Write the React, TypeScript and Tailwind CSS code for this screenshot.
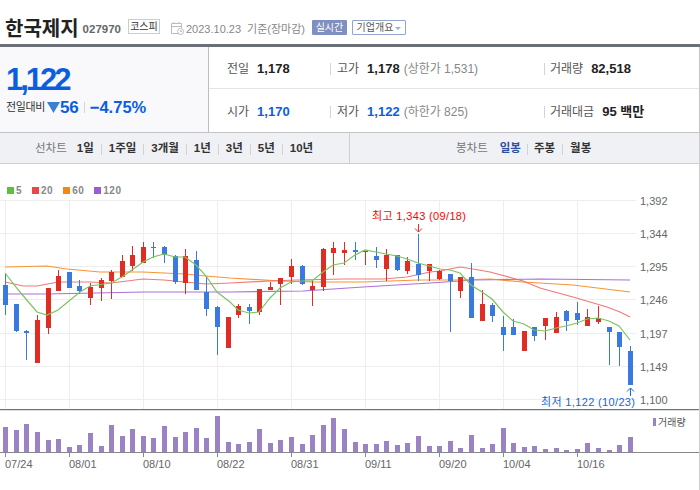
const KR = "font-['Liberation_Sans','Noto_Sans_CJK_KR',sans-serif]";

// [x, bodyTop, bodyBottom, wickTop, wickBottom, up?]
const candles: [number, number, number, number, number, number][] = [
  [5.5, 285, 305, 274, 315, 0], [16.5, 304, 331, 304, 332, 0], [26.5, 331, 333, 330, 360, 0],
  [37.5, 320, 363, 315, 363, 1], [48.5, 288, 328, 288, 334, 1], [58.5, 276, 291, 270, 291, 1],
  [69.5, 272, 288, 272, 288, 0], [79.5, 286, 291, 280, 294, 0], [90.5, 287, 298, 283, 305, 1],
  [101.5, 280, 288, 278, 301, 1], [111.5, 272, 281, 270, 299, 1], [122.5, 261, 277, 255, 277, 1],
  [132.5, 255, 266, 246, 271, 1], [143.5, 247, 263, 242, 263, 1], [153.5, 247, 248, 242, 258, 0],
  [164.5, 247, 255, 246, 263, 0], [175.5, 256, 282, 255, 284, 0], [185.5, 256, 283, 249, 294, 1],
  [196.5, 260, 290, 251, 290, 0], [206.5, 292, 309, 276, 316, 0], [217.5, 307, 327, 306, 355, 0],
  [228.5, 317, 348, 317, 345, 1], [238.5, 306, 315, 304, 318, 1], [249.5, 307, 311, 304, 324, 0],
  [259.5, 289, 312, 289, 315, 1], [270.5, 287, 290, 282, 290, 1], [280.5, 278, 284, 278, 305, 1],
  [291.5, 266, 277, 259, 284, 1], [302.5, 266, 284, 265, 285, 0], [312.5, 286, 290, 280, 306, 1],
  [323.5, 249, 287, 248, 291, 1], [333.5, 248, 253, 242, 275, 1], [344.5, 250, 253, 242, 265, 1],
  [355.5, 250, 252, 242, 260, 0], [365.5, 251, 252, 251, 265, 1], [376.5, 256, 260, 247, 268, 0],
  [386.5, 255, 269, 249, 281, 1], [397.5, 255, 270, 255, 271, 0], [407.5, 261, 271, 257, 274, 1],
  [418.5, 264, 275, 234, 281, 0], [429.5, 264, 271, 264, 281, 1], [439.5, 271, 279, 270, 280, 1],
  [450.5, 274, 281, 274, 332, 0], [460.5, 277, 291, 277, 298, 1], [471.5, 277, 318, 263, 318, 0],
  [482.5, 304, 321, 290, 321, 1], [492.5, 305, 316, 303, 322, 0], [503.5, 327, 335, 316, 351, 0],
  [513.5, 327, 335, 319, 335, 0], [524.5, 331, 351, 331, 351, 1], [534.5, 327, 336, 327, 341, 0],
  [545.5, 318, 326, 318, 340, 1], [556.5, 317, 333, 312, 333, 1], [566.5, 311, 321, 310, 331, 0],
  [577.5, 313, 320, 302, 325, 0], [587.5, 317, 326, 309, 326, 1], [598.5, 318, 322, 306, 324, 1],
  [609.5, 327, 332, 327, 365, 0], [619.5, 332, 347, 332, 366, 0], [630.5, 351, 385, 346, 385, 0],
];

const volumes = [
  25, 22, 28, 20, 12, 13, 5, 7, 19, 6, 27, 16, 23, 16, 14, 26, 15, 20, 24, 14,
  36, 10, 8, 10, 23, 9, 12, 15, 8, 17, 27, 34, 23, 10, 8, 8, 11, 7, 9, 16,
  6, 6, 11, 4, 17, 4, 8, 24, 9, 5, 6, 3, 4, 2, 3, 9, 4, 2, 7, 15,
];

const ma5 = "5,273 20,292 37,312 47,315 58,310 80,292 90,286 111,283 122,277 132,270 143,262 153,257 164,254 175,257 185,257 196,265 206,276 217,292 230,302 238,310 249,313 259,312 270,298 280,288 291,282 302,281 312,281 323,272 333,265 344,263 355,255 365,250 376,252 386,254 397,256 407,259 418,263 429,266 440,269 450,270 460,273 471,285 482,292 492,299 503,312 513,321 524,324 534,330 545,331 556,328 566,326 577,323 587,319 598,318 609,321 619,326 630,340";
const ma20 = "5,282 23,286 37,286 58,282 90,282 111,283 143,279 164,280 185,282 206,284 230,283 270,281 297,280 343,279 383,279 407,277 430,272 440,271 460,267 473,269 490,272 523,281 540,288 573,297 607,307 620,312 630,317";
const ma60 = "5,267 47,266 67,269 100,272 143,272 185,274 206,276 230,278 280,281 313,282 363,282 418,280 460,280 490,279 523,282 573,285 630,292";
const ma120 = "5,294 47,294 143,292 230,292 303,291 363,287 430,283 460,281 473,280 540,279 630,280";

const gridY = [200.5, 233.5, 266.5, 299.5, 333.5, 366.5, 399.5];
const gridX = [5.5, 69.5, 143.5, 217.5, 291.5, 365.5, 439.5, 503.5, 577.5];
const priceLabels = ["1,392", "1,344", "1,295", "1,246", "1,197", "1,149", "1,100"];
const dates = [
  ["07/24", 5.5], ["08/01", 69.5], ["08/10", 143.5], ["08/22", 217.5], ["08/31", 291.5],
  ["09/11", 365.5], ["09/20", 439.5], ["10/04", 503.5], ["10/16", 577.5],
] as [string, number][];

const legend = [
  ["5", "bg-[#5dbf3e]"], ["20", "bg-[#ef4444]"], ["60", "bg-[#f58717]"], ["120", "bg-[#a05bd0]"],
];

function Sep() {
  return <span className="h-[12px] w-px bg-[#d5d5d5]" />;
}

function Cell({ label, value, tone, gap, extra }: { label: string; value: string; tone: string; gap: string; extra?: string }) {
  return (
    <div className="flex items-center">
      <span className={`text-[12px] text-[#555] ${gap}`}>{label}</span>
      <span className={`text-[13px] font-bold ${tone}`}>{value}</span>
      {extra && <span className="ml-[4px] text-[12px] text-[#888]">{extra}</span>}
    </div>
  );
}

function InfoRow({ a, b, c, className }: { a: React.ReactNode; b: React.ReactNode; c: React.ReactNode; className: string }) {
  return (
    <div className={`flex items-center ${className}`}>
      <div className="w-[121px] pl-[18px]">{a}</div>
      <Sep />
      <div className="w-[213px] pl-[6px]">{b}</div>
      <Sep />
      <div className="pl-[5px]">{c}</div>
    </div>
  );
}

function Periods() {
  const items = ["1일", "1주일", "3개월", "1년", "3년", "5년", "10년"];
  return (
    <div className="flex w-[350px] items-center border-r border-[#cfcfcf] pt-[2px] pl-[35px]">
      <span className="mr-[10px] text-[#777]">선차트</span>
      {items.map((t, i) => (
        <div key={t} className="flex items-center">
          {i > 0 && <span className="mx-[7px] h-[11px] w-px bg-[#d2d2d6]" />}
          <span className="font-bold text-[#333]">{t}</span>
        </div>
      ))}
    </div>
  );
}

function Chart() {
  return (
    <svg width="699" height="296" viewBox="0 194 699 296" className="block">
      {gridY.map((y) => <line key={y} x1="0" x2="636" y1={y} y2={y} stroke="#eeeeee" />)}
      {gridX.map((x) => <line key={x} x1={x} x2={x} y1="200" y2="409" stroke="#eeeeee" />)}

      <polyline points={ma120} fill="none" stroke="#a868d4" strokeWidth="1.2" opacity="0.95" />
      <polyline points={ma60} fill="none" stroke="#f58f2a" strokeWidth="1.2" opacity="0.95" />
      <polyline points={ma20} fill="none" stroke="#ee6a6a" strokeWidth="1.2" opacity="0.9" />

      {candles.map(([x, t, b, wt, wb, up]) => (
        <g key={x} fill={up ? "#e12c24" : "#3a7ae0"}>
          <rect x={x - 0.5} y={wt} width="1" height={wb - wt} />
          <rect x={x - 2.5} y={t} width="5" height={Math.max(b - t, 1)} />
        </g>
      ))}
      <polyline points={ma5} fill="none" stroke="#7cc35f" strokeWidth="1.2" />

      {priceLabels.map((p, i) => (
        <text key={p} x="640" y={gridY[i] + 4} fontSize="11" fill="#666" fontFamily="'Liberation Sans', sans-serif">{p}</text>
      ))}

      <text x="372" y="220" fontSize="11" fill="#ff0000" letterSpacing="0.35" fontFamily="'Liberation Sans', 'Noto Sans CJK KR', sans-serif">최고 1,343 (09/18)</text>
      <path d="M418.5 224v8M415 228.5l3.5 3.5 3.5-3.5" fill="none" stroke="#e12c24" />
      <text x="541" y="406" fontSize="11" fill="#1a66d0" letterSpacing="0.35" fontFamily="'Liberation Sans', 'Noto Sans CJK KR', sans-serif">최저 1,122 (10/23)</text>
      <path d="M630.5 388v8M627 391.5l3.5-3.5 3.5 3.5" fill="none" stroke="#1a66d0" />

      <rect x="0" y="409" width="700" height="1" fill="#6d7278" />
      <rect x="0" y="410" width="700" height="1" fill="#dde0e4" />

      {candles.map(([x], i) => (
        <rect key={x} x={x - 2.5} y={452 - volumes[i]} width="5" height={volumes[i]} fill="#9b82c4" />
      ))}
      <rect x="0" y="452" width="700" height="1" fill="#85888c" />
      {dates.map(([d, x]) => (
        <g key={d}>
          <line x1={x} x2={x} y1="453" y2="457" stroke="#85888c" />
          <text x={x - 0.5} y="468" fontSize="11" fill="#666" fontFamily="'Liberation Sans', sans-serif">{d}</text>
        </g>
      ))}

      <rect x="653" y="418" width="3" height="8" fill="#9b82c4" />
      <text x="658" y="426" fontSize="10" fill="#555" fontFamily="'Liberation Sans', 'Noto Sans CJK KR', sans-serif">거래량</text>
    </svg>
  );
}

export default function App() {
  return (
    <div className={`h-[490px] w-[700px] overflow-hidden bg-white ${KR}`}>
      <header className="flex h-[44px] items-end pl-[5px]">
        <h1 className="text-[20px] leading-[30px] font-bold text-[#222]">한국제지</h1>
        <span className="mb-[6px] ml-[4px] text-[11.5px] font-bold text-[#666]">027970</span>
        <span className="mb-[10px] ml-[7px] flex h-[15px] w-[32px] items-center justify-center border border-[#ccc] text-[10px] text-[#333]">코스피</span>
        <svg width="13" height="13" viewBox="0 0 13 13" className="mb-[9px] ml-[11px]" fill="none" stroke="#bbb">
          <path d="M8 11.5H.5v-10h10V6M.5 4.5h10M3 0v2M8 0v2" />
          <circle cx="9.5" cy="9.5" r="3" />
          <path d="M9.5 8v1.5H11" />
        </svg>
        <span className="mb-[7px] ml-[2px] text-[11px] text-[#888]">2023.10.23</span>
        <span className="mb-[7px] ml-[6px] text-[11px] text-[#888]">기준(장마감)</span>
        <span className="mb-[9px] ml-[7px] flex h-[15px] w-[35px] items-center justify-center rounded-[1px] bg-[#7f8fbf] text-[10px] text-white">실시간</span>
        <span className="mb-[9px] ml-[5px] flex h-[15px] w-[54px] items-center justify-center gap-[2px] rounded-[1px] border border-[#93a3cc] text-[10px] text-[#555]">
          기업개요
          <span className="mt-[1px] h-0 w-0 border-x-[3px] border-t-[3px] border-x-transparent border-t-[#a3aec9]" />
        </span>
      </header>

      <div className="h-[3px] bg-[#6b6f76]" />

      <section className="flex h-[86px] border-r border-b border-[#c4c4c8]">
        <div className="flex w-[209px] flex-col border-r border-[#bdbdc2] bg-[#f9f9fb] pt-[15px] pl-[6px]">
          <div className="text-[31px] leading-[36px] font-bold tracking-[-3px] text-[#0a5fe0]">1,122</div>
          <div className="mt-[1px] flex items-center">
            <span className="text-[11px] tracking-[-0.4px] text-[#333]">전일대비</span>
            <svg width="13" height="11" viewBox="0 0 13 11" className="ml-[2px]">
              <path d="M0 0h13L6.5 11z" fill="#3c7fd0" />
            </svg>
            <span className="text-[17px] leading-none font-bold text-[#0a5fe0]">56</span>
            <span className="mx-[5px] h-[11px] w-px bg-[#d5d5d5]" />
            <span className="text-[16.5px] leading-none font-bold text-[#0a5fe0]">−4.75%</span>
          </div>
        </div>
        <div className="flex flex-1 flex-col">
          <InfoRow
            className="h-[42px] border-b border-[#e5e5e8] pt-[2px]"
            a={<Cell label="전일" value="1,178" tone="text-[#222]" gap="mr-[8px]" />}
            b={<Cell label="고가" value="1,178" tone="text-[#222]" gap="mr-[8px]" extra="(상한가 1,531)" />}
            c={<Cell label="거래량" value="82,518" tone="text-[#222]" gap="mr-[8px]" />}
          />
          <InfoRow
            className="h-[43px] pt-[2px]"
            a={<Cell label="시가" value="1,170" tone="text-[#0a5fe0]" gap="mr-[8px]" />}
            b={<Cell label="저가" value="1,122" tone="text-[#0a5fe0]" gap="mr-[8px]" extra="(하한가 825)" />}
            c={<Cell label="거래대금" value="95 백만" tone="text-[#222]" gap="mr-[8px]" />}
          />
        </div>
      </section>

      <nav className="flex h-[31px] border-r border-b border-[#cfcfcf] bg-[#f0f1f5] text-[11.5px]">
        <Periods />
        <div className="flex flex-1 items-center pt-[2px] pl-[106px]">
          <span className="mr-[12px] text-[#777]">봉차트</span>
          <span className="font-bold text-[#2f4fa0]">일봉</span>
          <span className="mx-[6px] h-[11px] w-px bg-[#d2d2d6]" />
          <span className="font-bold text-[#333]">주봉</span>
          <span className="mx-[7px] h-[11px] w-px bg-[#d2d2d6]" />
          <span className="font-bold text-[#333]">월봉</span>
        </div>
      </nav>

      <div className="border-r border-[#cfcfcf]">
        <div className="flex h-[30px] items-start gap-[10px] pt-[23px] pl-[7px]">
          {legend.map(([name, color]) => (
            <div key={name} className="flex items-center gap-[2px]">
              <span className={`h-[7px] w-[7px] ${color}`} />
              <span className="text-[10px] leading-[7px] font-bold tracking-[0.5px] text-[#888]">{name}</span>
            </div>
          ))}
        </div>
        <Chart />
      </div>
    </div>
  );
}
